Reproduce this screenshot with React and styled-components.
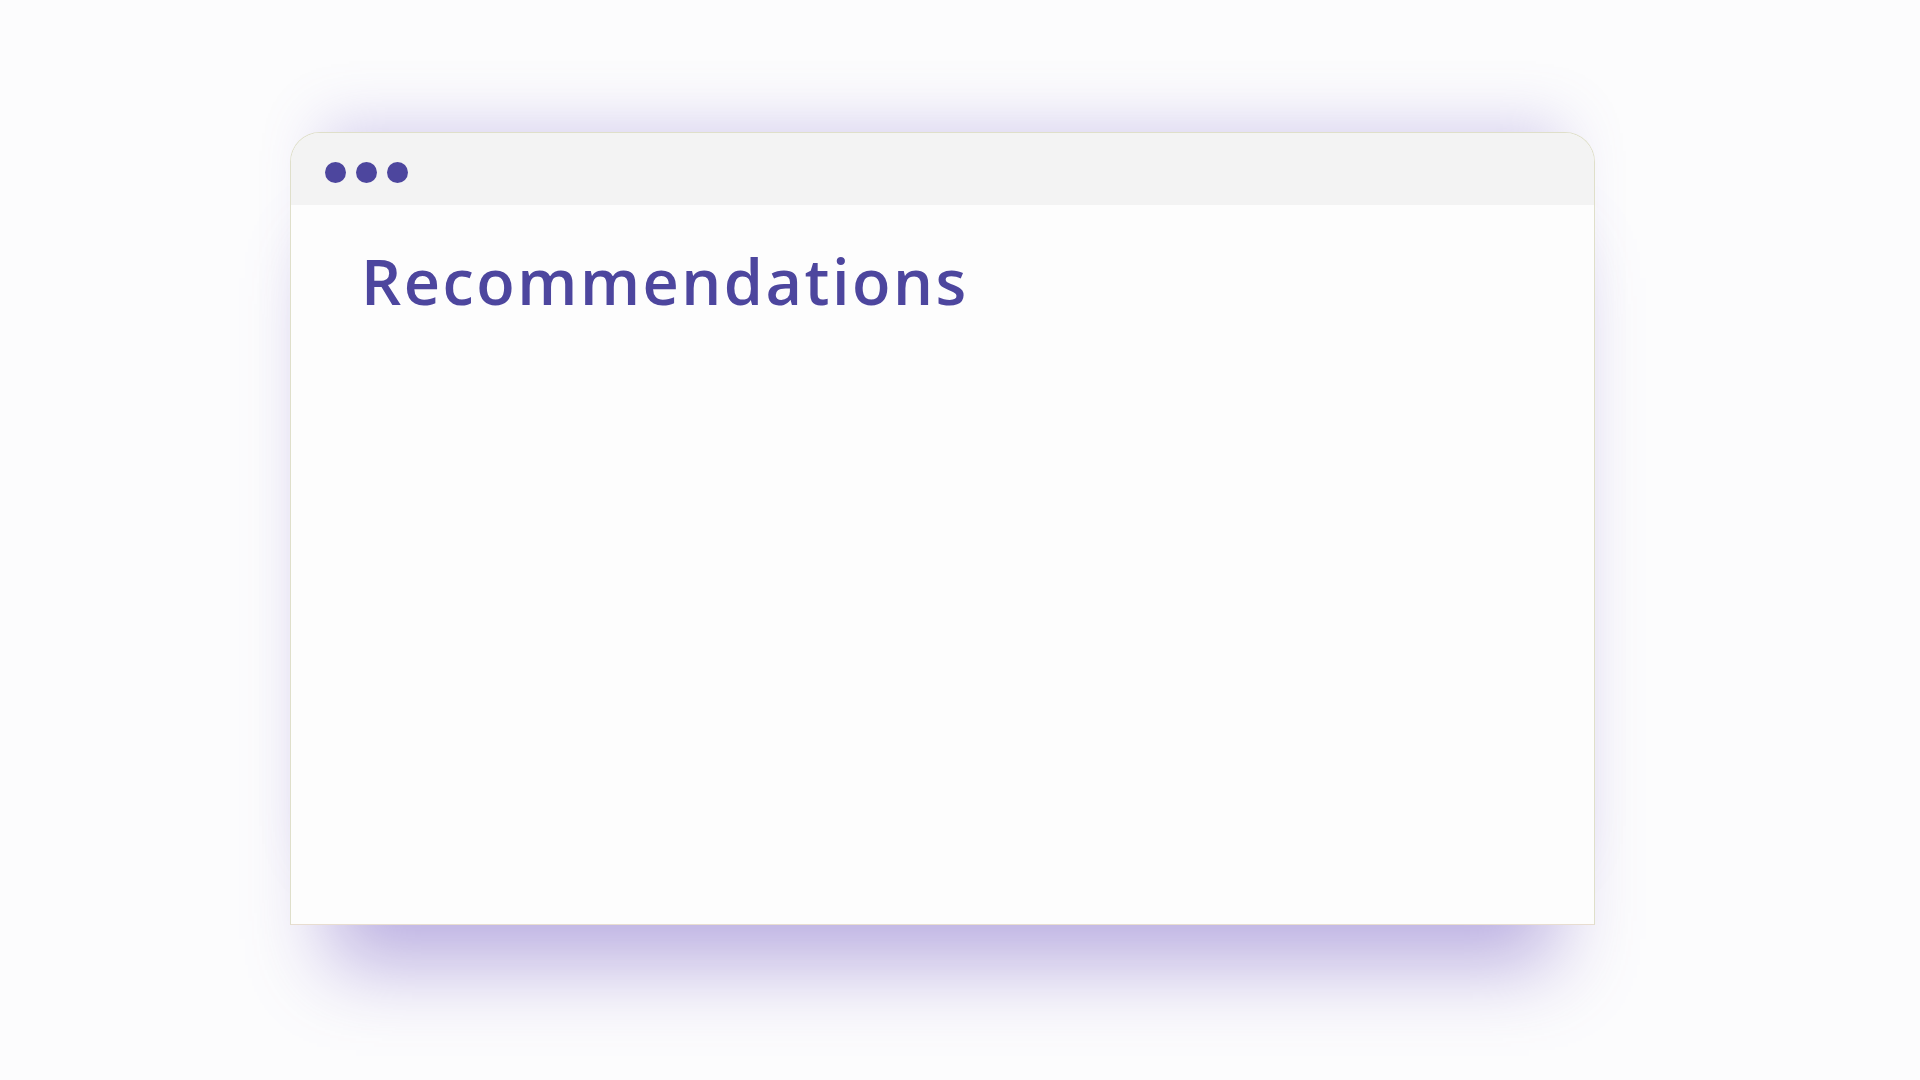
import React from 'react';
import styled, { createGlobalStyle } from 'styled-components';

const GlobalStyle = createGlobalStyle`
    html, body {
        margin: 0;
        padding: 0;
        background: #fcfcfd;
        font-family: "Open Sans", "Liberation Sans", sans-serif;
    }
`;

const Page = styled.div`
    width: 1920px;
    height: 1080px;
    box-sizing: border-box;
    padding: 132px 0 0 290px;
    overflow: hidden;
`;

const BrowserWindow = styled.div`
    width: 1305px;
    height: 793px;
    box-sizing: border-box;
    display: flex;
    flex-direction: column;
    background: #fdfdfd;
    border: 1px solid #dfdfca;
    border-bottom-color: #e8ddd0;
    border-radius: 30px 30px 0 0;
    box-shadow:
        0 80px 75px -40px rgba(115, 90, 195, 0.48),
        0 -40px 55px -32px rgba(130, 110, 205, 0.3);
`;

const TitleBar = styled.div`
    height: 72px;
    flex-shrink: 0;
    box-sizing: border-box;
    display: flex;
    align-items: center;
    gap: 10px;
    padding: 6px 0 0 34px;
    background: #f3f3f3;
    border-radius: 29px 29px 0 0;
`;

const Dot = styled.span`
    width: 21px;
    height: 21px;
    border-radius: 50%;
    background: #4d469e;
`;

const Content = styled.div`
    flex: 1;
    padding: 36px 0 0 70px;
`;

const Heading = styled.h1`
    margin: 0;
    font-family: "Open Sans", "Liberation Sans", sans-serif;
    font-weight: 600;
    font-size: 63px;
    line-height: 80px;
    letter-spacing: 2.5px;
    color: #4d469e;
`;

export default function App() {
    return (
        <Page>
            <GlobalStyle />
            <BrowserWindow>
                <TitleBar>
                    <Dot />
                    <Dot />
                    <Dot />
                </TitleBar>
                <Content>
                    <Heading>Recommendations</Heading>
                </Content>
            </BrowserWindow>
        </Page>
    );
}
